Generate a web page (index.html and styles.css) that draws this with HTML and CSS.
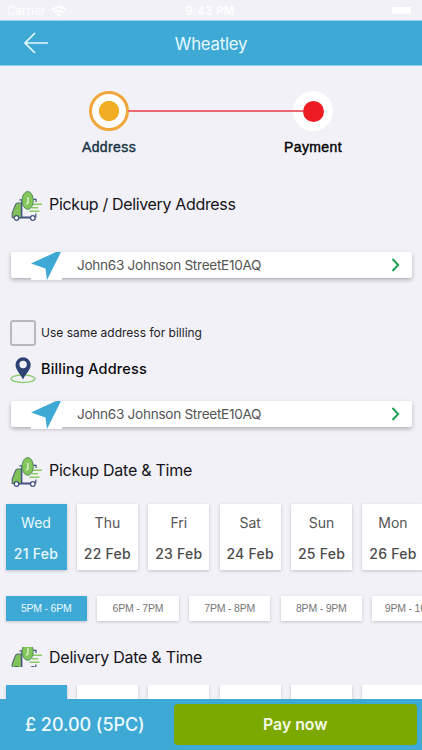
FILE: index.html
```html
<!DOCTYPE html>
<html lang="en">
<head>
<meta charset="utf-8">
<title>Wheatley</title>
<link rel="stylesheet" href="styles.css">
</head>
<body>
<svg class="defs" aria-hidden="true">
  <symbol id="truck" viewBox="0 0 31 30">
    <path d="M1.200 26.500V22L4.500 13.500Q5 12.300 6.500 12H10.300V26.500Z" fill="#80c257" stroke="#52657a" stroke-width="1.100"/>
    <path d="M7 27H20M8.500 8.800H12M10.800 9V26H23.500M24.800 22.500V26.500M21.500 8.300H25V11" fill="none" stroke="#43527f" stroke-width="1.200"/>
    <circle cx="5.500" cy="27" r="2.300" fill="#fff" stroke="#43527f" stroke-width="1.300"/>
    <circle cx="21.800" cy="27" r="2.300" fill="#fff" stroke="#43527f" stroke-width="1.300"/>
    <path d="M20 13.300H31M20.500 16.700H27M18.500 20.300H28.500" stroke="#8acb60" stroke-width="1.600"/>
    <ellipse cx="16.700" cy="9.400" rx="5.600" ry="8.900" fill="#83c65a" stroke="#528d5b" stroke-width="1"/>
    <path d="M17 6V11.500L15.300 13.300" fill="none" stroke="#f2f9ed" stroke-width="1.200"/>
  </symbol>
  <symbol id="arrow" viewBox="0 0 31 28">
    <path d="M30 0 16 28 14.500 16.500 0 11.500 25 0Z" fill="#3fa9d5"/>
  </symbol>
</svg>
<div class="screen">
  <div class="status">
    <span class="carrier">Carrier <svg width="16" height="11" viewBox="0 0 16 11"><path d="M1 4Q8-2 15 4M3.500 6.600Q8 3 12.500 6.600" fill="none" stroke="#fff" stroke-width="2"/><path d="M5.500 8.500Q8 6.500 10.500 8.500L8 11Z" fill="#fff"/></svg></span>
    <span class="clock">9:43 PM</span>
    <span class="battery"></span>
  </div>
  <header class="bar">
    <svg class="back" width="25" height="22" viewBox="0 0 25 22"><path d="M11 1 1 11 11 21M1 11H24" fill="none" stroke="#e4f8ff" stroke-width="1.700"/></svg>
    <h1>Wheatley</h1>
  </header>
  <div class="steps">
    <div class="step"><span class="dot current"></span><span class="label navy">Address</span></div>
    <div class="line"></div>
    <div class="step"><span class="dot next"></span><span class="label">Payment</span></div>
  </div>
  <div class="heading first"><svg class="truck"><use href="#truck"/></svg><h2 class="t1">Pickup / Delivery Address</h2></div>
  <div class="address">
    <span class="pin"><svg width="31" height="28"><use href="#arrow"/></svg></span>
    <span class="street">John63 Johnson StreetE10AQ</span>
    <svg class="chevron" width="9" height="14" viewBox="0 0 9 14"><path d="M1.500 1 7.200 7 1.500 13" fill="none" stroke="#16a34c" stroke-width="1.900"/></svg>
  </div>
  <div class="same"><span class="box"></span><span class="same-text">Use same address for billing</span></div>
  <div class="billing">
    <svg width="26" height="27" viewBox="0 0 26 27"><ellipse cx="13" cy="21.800" rx="12" ry="3.800" fill="none" stroke="#8bcb70" stroke-width="1.300"/><path d="M13 22.500C10.500 17 5.500 13 5.500 7.800A7.600 7.600 0 0 1 20.700 7.800C20.700 13 15.500 17 13 22.500Z" fill="#2e4374"/><circle cx="13.100" cy="7.500" r="3.700" fill="#f2f1f8"/></svg>
    <h2>Billing Address</h2>
  </div>
  <div class="address second">
    <span class="pin"><svg width="31" height="28"><use href="#arrow"/></svg></span>
    <span class="street">John63 Johnson StreetE10AQ</span>
    <svg class="chevron" width="9" height="14" viewBox="0 0 9 14"><path d="M1.500 1 7.200 7 1.500 13" fill="none" stroke="#16a34c" stroke-width="1.900"/></svg>
  </div>
  <div class="heading pickup"><svg class="truck"><use href="#truck"/></svg><h2 class="t2">Pickup Date &amp; Time</h2></div>
  <div class="days">
    <div class="day on"><span>Wed</span><b>21 Feb</b></div>
    <div class="day"><span>Thu</span><b>22 Feb</b></div>
    <div class="day"><span>Fri</span><b>23 Feb</b></div>
    <div class="day"><span>Sat</span><b>24 Feb</b></div>
    <div class="day"><span>Sun</span><b>25 Feb</b></div>
    <div class="day"><span>Mon</span><b>26 Feb</b></div>
  </div>
  <div class="slots">
    <div class="slot on">5PM - 6PM</div>
    <div class="slot">6PM - 7PM</div>
    <div class="slot">7PM - 8PM</div>
    <div class="slot">8PM - 9PM</div>
    <div class="slot">9PM - 10PM</div>
  </div>
  <div class="heading delivery"><svg class="truck" viewBox="0 5 31 20"><use href="#truck" width="31" height="30"/></svg><h2 class="t3">Delivery Date &amp; Time</h2></div>
  <div class="days peek">
    <div class="day on"></div><div class="day"></div><div class="day"></div><div class="day"></div><div class="day"></div><div class="day"></div>
  </div>
  <footer class="footer">
    <div class="total">£ 20.00 (5PC)</div>
    <button class="pay">Pay now</button>
  </footer>
</div>
</body>
</html>
```
FILE: styles.css
```css
* { box-sizing: border-box; }
body { margin: 0; background: #f2f1f8; font-family: Inter, "Liberation Sans", sans-serif; }
h1, h2 { margin: 0; font-weight: 400; white-space: nowrap; }
svg { display: block; flex: none; }
.defs { display: none; }
.screen { width: 422px; height: 750px; overflow: hidden; display: flex; flex-direction: column; }
.screen > * { flex: none; }
.status { height: 20px; display: grid; grid-template-columns: 1fr auto 1fr; align-items: center; padding: 2px 9px 0 7px; color: #fff; font-size: 11.5px; }
.carrier { display: flex; gap: 6px; align-items: center; letter-spacing: .1px; }
.clock { font-weight: 600; letter-spacing: .4px; }
.battery { justify-self: end; width: 19px; height: 7px; margin-right: 2px; margin-bottom: 2px; background: #fff; border-radius: 1px; }
.bar { height: 46px; background: #3fa9d5; border: solid #93d4ed; border-width: 1px 0; display: grid; grid-template-columns: 1fr auto 1fr; align-items: center; }
.back { margin-left: 24px; margin-top: -1px; }
.bar h1 { color: #e6f9ff; font-size: 16.8px; line-height: 44px; letter-spacing: -.25px; padding-top: 1px; }
.steps { display: flex; justify-content: center; padding-top: 25px; height: 124px; }
.step { width: 40px; display: flex; flex-direction: column; align-items: center; }
.dot { width: 40px; height: 40px; border-radius: 50%; background: #fff; display: grid; place-items: center; }
.dot::after { content: ""; border-radius: 50%; }
.current::after { width: 34px; height: 34px; border: 3px solid #f0a63a; background: radial-gradient(circle, #f1ae24 9.700px, #fff 10.500px); }
.next::after { width: 21px; height: 21px; background: #ed1b24; }
.label { margin-top: 8px; line-height: 17px; font-family: "Liberation Sans", sans-serif; font-size: 14px; -webkit-text-stroke: .4px; letter-spacing: .4px; }
.navy { color: #193344; }
.line { width: 175px; height: 2px; margin: 19px -10px 0 -1px; background: #ea6872; flex: none; z-index: 1; }
.heading { display: flex; align-items: center; height: 31px; padding-left: 10.500px; gap: 7.500px; color: #141419; }
.truck { width: 31px; height: 30px; }
.heading h2 { font-size: 16px; line-height: 20px; padding-bottom: 3px; letter-spacing: -.25px; }
.heading .t1 { letter-spacing: -.34px; }
.address { height: 26px; margin: 31px 10.500px 0; background: #fff; border-radius: 2px; box-shadow: 0 2px 4px #0004; display: flex; padding-left: 20.500px; align-items: flex-start; }
.pin { width: 31px; height: 28px; background: #fff; flex: none; }
.street { flex: 1; margin-left: 15px; line-height: 26px; font-size: 13.600px; letter-spacing: -.29px; color: #555; }
.chevron { align-self: center; margin-right: 12px; }
.same { display: flex; align-items: center; height: 26px; margin: 42px 0 0 10px; gap: 5px; color: #222226; }
.box { width: 26px; height: 26px; border: 2px solid #b9b8bc; border-radius: 3px; }
.same-text { font-size: 12px; padding-bottom: 2px; }
.billing { display: flex; align-items: center; height: 27px; margin: 11px 0 0 10px; gap: 5px; color: #08080b; }
.billing h2 { font-size: 14.500px; font-weight: 500; padding-bottom: 4px; letter-spacing: .18px; }
.second { margin-top: 17px; }
.pickup { margin-top: 29px; }
.days { display: flex; gap: 10.400px; margin: 17px 0 0 5.500px; height: 66px; }
.day { width: 61px; flex: none; height: 66px; background: #fff; box-shadow: 0 1px 3px #0003; display: flex; flex-direction: column; align-items: center; padding-top: 9px; color: #555; font-size: 14px; white-space: nowrap; }
.day span { line-height: 20px; }
.day b { margin-top: 11px; line-height: 20px; font-weight: 500; letter-spacing: .25px; color: #4b4b4b; }
.day.on, .day.on b, .slot.on { background: #3fa9d5; color: #e9faff; }
.slots { display: flex; gap: 10.200px; margin: 26px 0 0 5.500px; height: 25px; }
.slot { width: 81.500px; flex: none; background: #fff; box-shadow: 0 1px 3px #0003; display: grid; place-items: center; font: 10.500px/25px "Liberation Sans", sans-serif; letter-spacing: -.2px; color: #777; white-space: nowrap; }
.delivery { margin-top: 26px; height: 20px; }
.delivery .truck { height: 20px; }
.delivery h2 { padding-bottom: 1px; }
.peek { margin-top: 18px; height: 14px; overflow: hidden; margin-left: 0; padding-left: 5.500px; }
.footer { height: 51px; background: #3fa9d5; display: flex; align-items: center; padding: 0 5.500px 0 25px; z-index: 1; }
.total { width: 149px; color: #ecfaff; font-size: 18px; font-weight: 500; letter-spacing: -.05px; white-space: nowrap; }
.pay { flex: 1; height: 41px; padding: 0; border: 0; border-radius: 4px; background: #7ca900; color: #f6fbe8; font: 600 15.800px Inter, sans-serif; }
```
